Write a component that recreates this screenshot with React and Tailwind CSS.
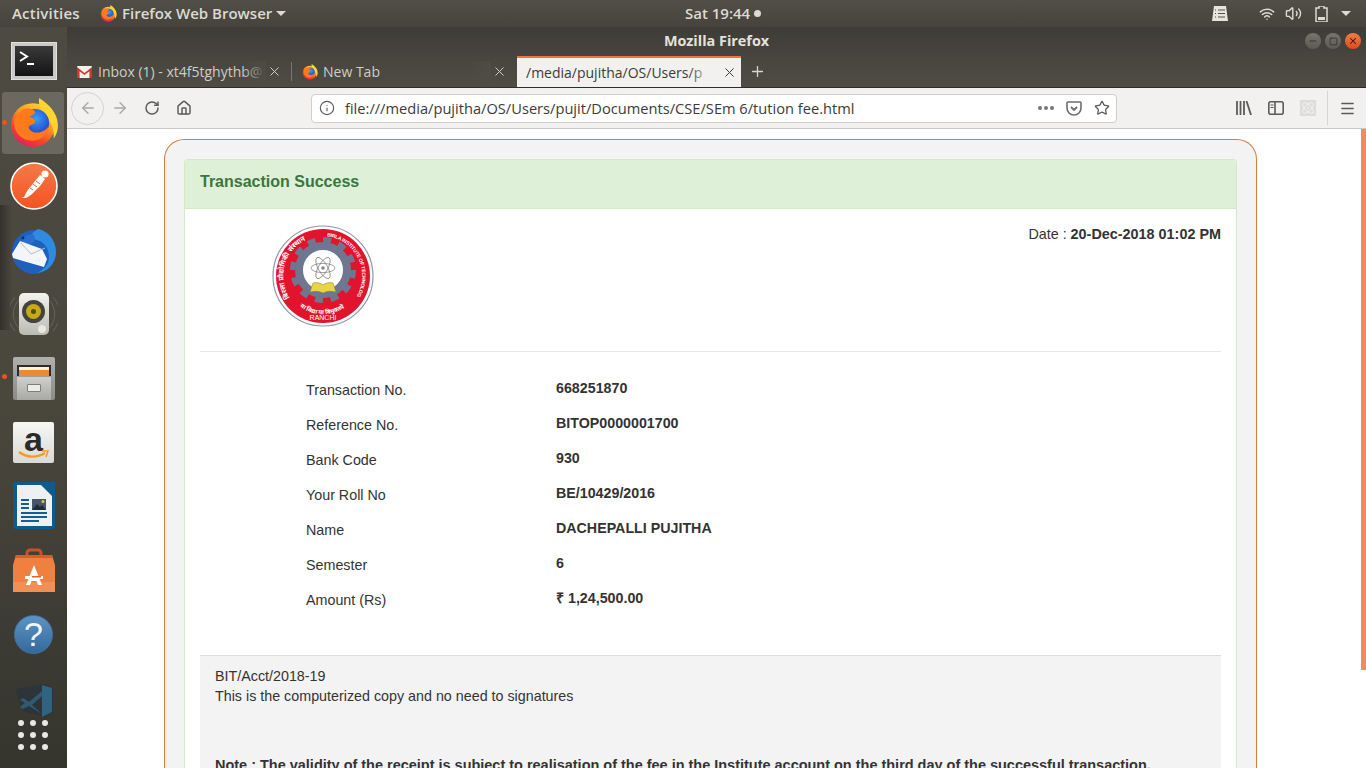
import React from 'react';
import { ArrowLeft, ArrowRight, RotateCw, Home, Info, Star, X, Plus, Menu, Atom, Wifi, Volume2, Minus, Square } from 'lucide-react';

const UI_FONT = { fontFamily: '"Open Sans", "Noto Sans", sans-serif' };

const ROWS = [
  ['Transaction No.', '668251870'],
  ['Reference No.', 'BITOP0000001700'],
  ['Bank Code', '930'],
  ['Your Roll No', 'BE/10429/2016'],
  ['Name', 'DACHEPALLI PUJITHA'],
  ['Semester', '6'],
  ['Amount (Rs)', '₹ 1,24,500.00'],
];

function FirefoxIcon({ size = 48, id = 'ff' }) {
  return (
    <svg width={size} height={size} viewBox="0 0 48 48">
      <defs>
        <linearGradient id={id + 'a'} x1="0.8" y1="0.05" x2="0.25" y2="1">
          <stop offset="0" stopColor="#ffd83a" />
          <stop offset="0.35" stopColor="#ff9a1f" />
          <stop offset="0.7" stopColor="#f5432b" />
          <stop offset="1" stopColor="#e11d5f" />
        </linearGradient>
        <radialGradient id={id + 'b'} cx="0.55" cy="0.35" r="0.7">
          <stop offset="0" stopColor="#2fa3f5" />
          <stop offset="0.6" stopColor="#2b58d8" />
          <stop offset="1" stopColor="#43229c" />
        </radialGradient>
      </defs>
      <circle cx="23" cy="26" r="21" fill={`url(#${id}a)`} />
      <path d="M29 0c8 5 18 14 18 26 0 6-2 10-4 13 0-12-3-18-9-22-4-5-6-11-5-17z" fill="#ffd52e" />
      <circle cx="25" cy="24" r="13.5" fill={`url(#${id}b)`} />
      <path d="M12 12c5-3 11-2 13 1 1 2-2 3-5 5 3 1 6 3 5 5-1 3-5 2-6 5 0 3 5 6 10 5 4-1 7-3 9-6-1 8-8 14-16 14-9 0-17-7-17-17 0-5 3-9 7-12z" fill="#ff7a1c" />
    </svg>
  );
}

function TerminalIcon() {
  return (
    <div className="w-[46px] h-[38px] bg-[#c9c9c6] border border-[#e2e2de] p-[3px]">
      <div className="w-full h-full bg-gradient-to-b from-[#3a3a3a] to-[#151515] relative">
        <svg width="38" height="30" viewBox="0 0 38 30">
          <path d="M5 6l7 4.5-7 4.5" fill="none" stroke="#fff" strokeWidth="2" />
          <path d="M12 18h7" stroke="#fff" strokeWidth="2" />
        </svg>
      </div>
    </div>
  );
}

function PostmanIcon() {
  return (
    <svg width="48" height="48" viewBox="0 0 48 48">
      <defs>
        <linearGradient id="pm" x1="0" y1="0" x2="0" y2="1">
          <stop offset="0" stopColor="#f47a4a" />
          <stop offset="1" stopColor="#f4531f" />
        </linearGradient>
      </defs>
      <circle cx="24" cy="24" r="23" fill="url(#pm)" stroke="#fff" strokeWidth="1.6" />
      <path d="M11 36l3-1 3-6 8-10 5-6 5 4-5 7-9 9-5 3z" fill="#fff" />
      <circle cx="35" cy="12" r="3.6" fill="#fff" />
      <path d="M26 19l4 3M23 22l4 3M20 26l3 2" stroke="#f4632f" strokeWidth="1" />
    </svg>
  );
}

function ThunderbirdIcon() {
  return (
    <svg width="48" height="48" viewBox="0 0 48 48">
      <circle cx="24" cy="26" r="22" fill="#1f5fbd" />
      <path d="M46 26c0 11-8 20-19 21 8-4 12-9 12-16 0-9-5-15-12-17-3-1-6-2-9-1 3-5 6-8 10-10 10 2 18 11 18 23z" fill="#2f8be0" />
      <path d="M12 14c2-4 6-6 11-6 2 3 2 5 1 8l-9 6c-1-3-2-5-3-8z" fill="#2a6fd0" />
      <path d="M2 28l8-13 22 8 5 10-3 8-21-6-10-3z" fill="#f4f5f8" />
      <path d="M11 17l10 11 14-6" fill="none" stroke="#b9bec9" strokeWidth="1" />
      <circle cx="13" cy="12" r="1.4" fill="#10305f" />
    </svg>
  );
}

function RhythmboxIcon() {
  return (
    <div className="relative w-[48px] h-[44px] flex items-center justify-center">
      <svg className="absolute inset-0" width="48" height="44" viewBox="0 0 48 44">
        <path d="M9 8a20 20 0 0 0 0 28M5 5a25 25 0 0 0 0 34M39 8a20 20 0 0 1 0 28M43 5a25 25 0 0 1 0 34" fill="none" stroke="#6f7674" strokeWidth="1" opacity="0.6" />
      </svg>
      <div className="relative w-[30px] h-[42px] rounded-[5px] bg-gradient-to-b from-[#f4f4ee] to-[#b9bab2] flex flex-col items-center pt-[7px]">
        <div className="w-[23px] h-[23px] rounded-full bg-[#45433c] flex items-center justify-center">
          <div className="w-[15px] h-[15px] rounded-full bg-[#c9a917] flex items-center justify-center">
            <div className="w-[5px] h-[5px] rounded-full bg-[#55500f]" />
          </div>
        </div>
        <div className="absolute right-[3px] bottom-[2px] w-[8px] h-[8px] rounded-full bg-[#e8e8e2]" />
      </div>
    </div>
  );
}

function FilesIcon() {
  return (
    <div className="w-[42px] h-[43px] rounded-[2px] bg-gradient-to-b from-[#b0b0ac] to-[#8a8a86] px-[4px] pt-[8px] relative">
      <div className="h-[11px] bg-[#2f2b26] pt-[2px] px-[2px]">
        <div className="h-[3px] bg-[#f7f2e0]" />
        <div className="h-[6px] bg-[#e88a36]" />
      </div>
      <div className="absolute left-[4px] right-[4px] bottom-0 h-[23px] bg-gradient-to-b from-[#cfcfcb] to-[#a9a9a5] flex items-center justify-center">
        <div className="w-[14px] h-[8px] bg-[#ececea] border border-[#7d7d79] rounded-[1px]" />
      </div>
    </div>
  );
}

function AmazonIcon() {
  return (
    <div className="w-[41px] h-[41px] rounded-[2px] bg-gradient-to-b from-[#f7f7f5] to-[#d9d9d5] flex flex-col items-center relative">
      <span className="text-[34px] leading-[34px] font-bold text-[#2b2b2b]" style={{ fontFamily: '"Liberation Sans", sans-serif' }}>a</span>
      <svg className="absolute left-[5px] bottom-[2px]" width="32" height="11" viewBox="0 0 32 11">
        <path d="M1 2c8 6 18 6 26 1" fill="none" stroke="#f59a23" strokeWidth="2.4" />
        <path d="M24 1h6l-2 6" fill="none" stroke="#f59a23" strokeWidth="1.6" />
      </svg>
    </div>
  );
}

function WriterIcon() {
  return (
    <svg width="42" height="48" viewBox="0 0 42 48">
      <path d="M2 0h40v44a3 3 0 0 1-3 3H3a3 3 0 0 1-3-3V2a2 2 0 0 1 2-2z" fill="#0b5c8c" />
      <path d="M4 3h24l11 11v30H4z" fill="#eef0f2" />
      <path d="M28 0l14 0v14z" fill="#0b5c8c" />
      <path d="M8 18h8M8 22h8M8 26h8M8 31h26M8 35h26M8 39h18" stroke="#12608f" strokeWidth="1.8" />
      <rect x="19" y="17" width="14" height="11" fill="#44576a" />
      <path d="M19 28l5-6 3 3 2-2 4 5z" fill="#1f2b36" />
      <circle cx="30" cy="19.5" r="1.5" fill="#e9c13b" />
    </svg>
  );
}

function SoftwareIcon() {
  return (
    <svg width="42" height="44" viewBox="0 0 42 44">
      <path d="M14 12V5a3 3 0 0 1 3-3h8a3 3 0 0 1 3 3v7" fill="none" stroke="#c9512a" strokeWidth="3" />
      <path d="M3 7h36l3 10v27H0V17z" fill="#f08040" />
      <path d="M0 34h42v10H0z" fill="#f18f54" />
      <path d="M3 7h36l1 3H2z" fill="#d85c2e" />
      <path d="M21 17l-8 20h4l1.5-4h5l1.5 4h4z" fill="#fff" />
      <path d="M12 28h18v3H12z" fill="#fff" />
      <path d="M19 28h9v1.5h-9z" fill="#e8602a" />
    </svg>
  );
}

function HelpIcon() {
  return (
    <div className="w-[39px] h-[39px] rounded-full bg-gradient-to-b from-[#5d93c4] to-[#35699c] border border-[#3d74a8] flex items-center justify-center">
      <span className="text-[34px] leading-none text-[#f1f5f8]" style={{ fontFamily: '"Liberation Sans", sans-serif' }}>?</span>
    </div>
  );
}

function VsCodeIcon() {
  return (
    <svg width="42" height="36" viewBox="0 0 42 36" className="opacity-60 translate-y-[3px]">
      <path d="M2 6l30-5 8 4v25l-8 4-22-6z" fill="#26333f" />
      <path d="M29 2l10 3v24l-10 5z" fill="#2d7fb8" />
      <path d="M7 17l3-2 6 4 13-11v5l-10 9 10 9-13-8-6 3-3-2 5-4z" fill="#2d6f9f" />
    </svg>
  );
}

function Logo() {
  return (
    <svg width="102" height="102" viewBox="0 0 102 102">
      <defs>
        <path id="arcRight" d="M55 11.200a40 40 0 0 1 29 61" />
        <path id="arcLeft" d="M17.700 72.700a40 40 0 0 1 29.300-61.500" />
        <path id="arcBottom" d="M22 76a38.300 38.300 0 0 0 58 0" />
      </defs>
      <circle cx="51" cy="51" r="50" fill="#fff" stroke="#8e96ab" strokeWidth="1.2" />
      <circle cx="51" cy="51" r="47" fill="#e2142d" />
      <circle cx="51" cy="45" r="30" fill="none" stroke="#6e7690" strokeWidth="6" strokeDasharray="8 7.7" />
      <circle cx="51" cy="45" r="24" fill="#fff" stroke="#6e7690" strokeWidth="8" />
      <g fill="none" stroke="#888" strokeWidth="0.8">
        <ellipse cx="51" cy="43" rx="12" ry="4.6" />
        <ellipse cx="51" cy="43" rx="12" ry="4.6" transform="rotate(60 51 43)" />
        <ellipse cx="51" cy="43" rx="12" ry="4.6" transform="rotate(120 51 43)" />
      </g>
      <circle cx="51" cy="43" r="1.8" fill="#888" />
      <path d="M38 67l3-9c4-1 8 0 10 2 2-2 6-3 10-2l3 9c-5-1-9-1-13 1-4-2-8-2-13-1z" fill="#e8d44a" stroke="#8a7d1e" strokeWidth="0.5" />
      <g fill="#fff" fontWeight="700">
        <text fontSize="5" fontFamily='"Liberation Sans", sans-serif'><textPath href="#arcRight" textLength="82">BIRLA INSTITUTE OF TECHNOLOGY</textPath></text>
        <text fontSize="7" fontFamily='"Noto Sans", sans-serif'><textPath href="#arcLeft">बिरला प्रौद्योगिकी संस्थान</textPath></text>
        <text fontSize="6" fontFamily='"Noto Sans", sans-serif'><textPath href="#arcBottom" startOffset="8">या विद्या या विमुक्तये</textPath></text>
      </g>
      <text x="51" y="95" textAnchor="middle" fontSize="7" fill="#fff" fontFamily='"Liberation Sans", sans-serif'>RANCHI</text>
    </svg>
  );
}

function DockSlot({ h = 64, running, active, children }) {
  return (
    <div className={`relative w-full flex items-center justify-center ${h === 62 ? 'h-[62px]' : 'h-[64px]'}`}>
      {active && <div className="absolute left-[2px] right-[3px] top-0 bottom-0 rounded-[3px] bg-[#6b685f]" />}
      {running && <div className="absolute left-[2px] top-[28px] w-[5px] h-[5px] rounded-full bg-[#e95420]" />}
      <div className="relative">{children}</div>
    </div>
  );
}

function Dock() {
  return (
    <div className="relative w-[67px] shrink-0 h-full bg-gradient-to-b from-[#4c4a41] via-[#4a473d] to-[#35352e] overflow-hidden">
      <div className="absolute left-0 top-[178px] w-[12px] h-[125px] bg-gradient-to-r from-[#33312b] to-transparent" />
      <div className="pt-[3px]">
        <DockSlot h={62}><TerminalIcon /></DockSlot>
        <DockSlot h={62} active running><FirefoxIcon id="dock" size={50} /></DockSlot>
        <DockSlot><PostmanIcon /></DockSlot>
        <DockSlot><ThunderbirdIcon /></DockSlot>
        <DockSlot><RhythmboxIcon /></DockSlot>
        <DockSlot running><FilesIcon /></DockSlot>
        <DockSlot><AmazonIcon /></DockSlot>
        <DockSlot><WriterIcon /></DockSlot>
        <DockSlot><SoftwareIcon /></DockSlot>
        <DockSlot><HelpIcon /></DockSlot>
        <DockSlot><VsCodeIcon /></DockSlot>
      </div>
      <div className="absolute left-[18px] top-[693px] grid grid-cols-3 gap-x-[6px] gap-y-[6px]">
        {[...Array(9)].map((_, i) => (
          <div key={i} className="w-[6px] h-[6px] rounded-full bg-[#e8e8e4]" />
        ))}
      </div>
    </div>
  );
}

function TopBar() {
  return (
    <div className="relative h-[27px] shrink-0 flex items-center bg-gradient-to-b from-[#524f47] to-[#45433c] text-[#dcdad2] text-[15px] font-semibold" style={UI_FONT}>
      <span className="ml-[12px] w-[68px] whitespace-nowrap tracking-[0.2px]">Activities</span>
      <div className="ml-[20px]"><FirefoxIcon id="top" size={17} /></div>
      <span className="ml-[5px] w-[150px] whitespace-nowrap">Firefox Web Browser</span>
      <div className="ml-[4px] w-0 h-0 border-x-[5px] border-x-transparent border-t-[5px] border-t-[#dcdad2]" />
      <div className="absolute left-[685px] top-0 h-full flex items-center gap-[4px]">
        <span className="whitespace-nowrap">Sat 19:44</span>
        <div className="w-[7px] h-[7px] rounded-full bg-[#dcdad2]" />
      </div>
      <div className="ml-auto flex items-center text-[#dcdad2]">
        <svg width="16" height="15" viewBox="0 0 16 15">
          <path d="M2 0h12l2 15H0z" fill="#e6e4dd" />
          <path d="M3 4h1M3 7.500h1M3 11h1M6 4h7M6 7.500h7M6 11h7" stroke="#54514a" strokeWidth="1.2" />
        </svg>
        <Wifi className="ml-[31px]" size={16} strokeWidth={2.2} />
        <Volume2 className="ml-[10px]" size={17} strokeWidth={2} />
        <svg className="ml-[13px]" width="13" height="16" viewBox="0 0 13 16">
          <path d="M4 0h5v2h3v14H1V2h3z" fill="none" stroke="#dcdad2" strokeWidth="1.5" />
          <path d="M3 11h7v3H3z" fill="#dcdad2" />
        </svg>
        <div className="ml-[13px] mr-[15px] w-0 h-0 border-x-[5px] border-x-transparent border-t-[5px] border-t-[#dcdad2]" />
      </div>
    </div>
  );
}

function Tab({ label, icon, active }) {
  return (
    <div className={`relative w-[224px] h-full flex items-center ${active ? 'bg-[#f2f1f0] text-[#3c3b37] border-t-2 border-[#f0714a] pl-[9px]' : 'text-[#cfcdc6]'}`}>
      {icon && <div className="w-[31px] pl-[10px] shrink-0">{icon}</div>}
      <div className={`relative overflow-hidden whitespace-nowrap text-[14px] ${active ? 'w-[187px]' : 'w-[168px]'}`}>
        {label}
        <div className={`absolute right-0 top-0 bottom-0 w-[24px] bg-gradient-to-r from-transparent ${active ? 'to-[#f2f1f0]' : 'to-[#4f4c44]'}`} />
      </div>
      <X className={`absolute ${active ? 'right-[4px]' : 'right-[9px]'}`} size={15} strokeWidth={1.6} color={active ? '#3c3b37' : '#cfcdc6'} />
    </div>
  );
}

function GmailIcon() {
  return (
    <svg width="15" height="12" viewBox="0 0 15 12">
      <rect width="15" height="12" rx="1" fill="#f2f1ee" />
      <path d="M0 1l7.500 6L15 1v11h-2.600V5.200L7.500 9 2.600 5.200V12H0z" fill="#d3352b" />
    </svg>
  );
}

function BrowserChrome() {
  return (
    <div className="shrink-0" style={UI_FONT}>
      <div className="h-[29px] relative bg-gradient-to-b from-[#3e3c36] to-[#47453e] flex items-center justify-center text-[#e4e2db] text-[14.4px] font-bold">
        <span className="-translate-y-[1px]">Mozilla Firefox</span>
        <div className="absolute right-[5px] top-[6px] flex gap-[4px]">
          <div className="w-[16px] h-[16px] rounded-full bg-gradient-to-b from-[#77746c] to-[#5d5a52] flex items-center justify-center"><Minus size={10} color="#2e2d29" /></div>
          <div className="w-[16px] h-[16px] rounded-full bg-gradient-to-b from-[#77746c] to-[#5d5a52] flex items-center justify-center"><Square size={9} color="#2e2d29" /></div>
          <div className="w-[16px] h-[16px] rounded-full bg-gradient-to-b from-[#f47a48] to-[#db4a1a] flex items-center justify-center"><X size={10} color="#3a1a0a" strokeWidth={2.5} /></div>
        </div>
      </div>
      <div className="h-[32px] flex items-stretch bg-gradient-to-b from-[#47453e] to-[#4f4c44] border-b border-[#2e2d29]">
        <Tab label="Inbox (1) - xt4f5tghythb@" icon={<GmailIcon />} />
        <div className="w-px my-[6px] bg-[#7a776e]" />
        <Tab label="New Tab" icon={<FirefoxIcon id="tab" size={16} />} />
        <div className="w-px" />
        <Tab active label="/media/pujitha/OS/Users/p" />
        <Plus className="ml-[8px] self-center" size={17} strokeWidth={1.8} color="#d8d6cf" />
      </div>
      <div className="h-[41px] flex items-center bg-[#f2f1f0] border-b border-[#c8c7c3] text-[#5c5b58]">
        <div className="ml-[4px] w-[33px] h-[33px] rounded-full border border-[#d3d2ce] flex items-center justify-center">
          <ArrowLeft size={18} color="#a9a8a4" strokeWidth={1.8} />
        </div>
        <ArrowRight className="ml-[7px]" size={18} color="#a9a8a4" strokeWidth={1.8} />
        <RotateCw className="ml-[15px]" size={16} strokeWidth={2.2} />
        <Home className="ml-[16px]" size={16} strokeWidth={2.2} />
        <div className="ml-[119px] w-[806px] h-[29px] flex items-center bg-white border border-[#cfcec9] rounded-[4px]">
          <Info className="ml-[7px]" size={16} strokeWidth={1.7} />
          <span className="ml-[10px] pt-[1px] text-[14.65px] whitespace-nowrap text-[#3c3b37]">file:///media/pujitha/OS/Users/pujit/Documents/CSE/SEm 6/tution fee.html</span>
          <div className="ml-auto flex items-center">
            <div className="flex gap-[2px]">
              <div className="w-[4px] h-[4px] rounded-full bg-[#77767a]" />
              <div className="w-[4px] h-[4px] rounded-full bg-[#77767a]" />
              <div className="w-[4px] h-[4px] rounded-full bg-[#77767a]" />
            </div>
            <svg className="ml-[12px]" width="16" height="15" viewBox="0 0 16 15">
              <path d="M2 1h12a1 1 0 0 1 1 1v5c0 4-3 7-7 7s-7-3-7-7V2a1 1 0 0 1 1-1z" fill="none" stroke="#6e6d6a" strokeWidth="1.6" />
              <path d="M5 6l3 3 3-3" fill="none" stroke="#6e6d6a" strokeWidth="1.8" />
            </svg>
            <Star className="ml-[12px] mr-[6px]" size={16} strokeWidth={1.9} />
          </div>
        </div>
        <svg className="ml-[119px]" width="16" height="14" viewBox="0 0 16 14">
          <path d="M1 0v14M4.500 0v14M8 0v14" stroke="#5c5b58" strokeWidth="1.8" />
          <path d="M10.500 0l4.500 14" stroke="#5c5b58" strokeWidth="1.8" />
        </svg>
        <svg className="ml-[16px]" width="16" height="14" viewBox="0 0 16 14">
          <rect x="0.8" y="0.8" width="14.4" height="12.4" rx="2" fill="none" stroke="#5c5b58" strokeWidth="1.6" />
          <path d="M7 1v12" stroke="#5c5b58" strokeWidth="1.6" />
          <path d="M2.500 4h3M2.500 6.500h3" stroke="#5c5b58" strokeWidth="1.2" />
        </svg>
        <div className="ml-[16px] w-[16px] h-[16px] bg-[#dcdcda] flex items-center justify-center">
          <Atom size={14} color="#f4f4f2" strokeWidth={1.6} />
        </div>
        <div className="ml-[11px] w-px h-[34px] bg-[#d7d6d2]" />
        <Menu className="ml-[11px]" size={17} strokeWidth={2} />
      </div>
    </div>
  );
}

function Receipt() {
  return (
    <div className="ml-[97px] mt-[10px] w-[1093px] rounded-t-[20px] border border-b-0 border-[#d2803f] bg-[#f3f3f3] px-[19px] pt-[19px]">
      <div className="rounded-t-[4px] border border-b-0 border-[#d6e9c6] bg-white">
        <div className="h-[49px] flex items-center px-[15px] pb-[5px] bg-[#dff0d8] border-b border-[#d6e9c6] text-[16px] font-bold text-[#3c763d]">
          Transaction Success
        </div>
        <div className="px-[15px] pt-[16px]">
          <div className="flex justify-between items-start">
            <div className="ml-[72px]"><Logo /></div>
            <div className="-mt-[1px]">Date : <b className="text-[14.4px]">20-Dec-2018 01:02 PM</b></div>
          </div>
          <div className="mt-[24px] border-t border-[#e6e6e6]" />
          <div className="mt-[26px] ml-[106px]">
            {ROWS.map(([label, value]) => (
              <div key={label} className="h-[35px] flex">
                <div className="w-[250px] pt-[2px]">{label}</div>
                <div className="font-bold text-[14.25px]">{value}</div>
              </div>
            ))}
          </div>
          <div className="mt-[32px] h-[200px] bg-[#f3f3f3] border-t border-[#dddddd] px-[15px] pt-[10px]">
            <p>BIT/Acct/2018-19</p>
            <p>This is the computerized copy and no need to signatures</p>
            <p className="mt-[49px] font-bold whitespace-nowrap text-[14.48px]">
              Note : The validity of the receipt is subject to realisation of the fee in the Institute account on the third day of the successful transaction.
            </p>
          </div>
        </div>
      </div>
    </div>
  );
}

export default function App() {
  return (
    <div className="w-[1366px] h-[768px] overflow-hidden flex flex-col bg-white">
      <TopBar />
      <div className="flex-1 flex min-h-0">
        <Dock />
        <div className="flex-1 min-w-0 flex flex-col">
          <BrowserChrome />
          <div className="relative flex-1 min-h-0 overflow-hidden bg-white text-[14.3px] leading-[20px] text-[#333333]" style={{ fontFamily: '"Liberation Sans", Arial, sans-serif' }}>
            <Receipt />
            <div className="absolute right-0 top-0 w-[5px] h-[541px] bg-[#f08a66]" />
          </div>
        </div>
      </div>
    </div>
  );
}
